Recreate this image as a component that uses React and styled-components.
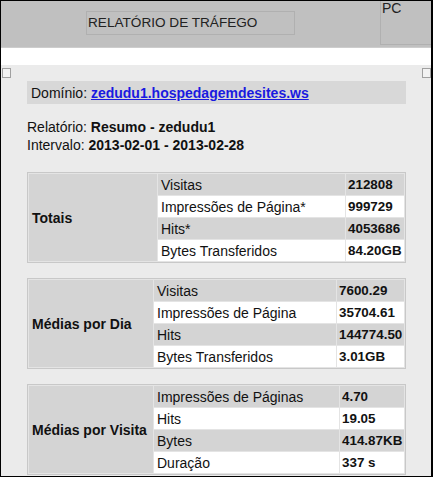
import React from "react";
import styled, { createGlobalStyle } from "styled-components";

const GlobalStyle = createGlobalStyle`
  html, body {
    margin: 0;
    padding: 0;
    background: #ffffff;
    font-family: "Liberation Sans", Arial, sans-serif;
  }
`;

const sections = [
  {
    title: "Totais",
    labelWidth: 128,
    valueWidth: 58,
    rows: [
      ["Visitas", "212808"],
      ["Impressões de Página*", "999729"],
      ["Hits*", "4053686"],
      ["Bytes Transferidos", "84.20GB"],
    ],
  },
  {
    title: "Médias por Dia",
    labelWidth: 124,
    valueWidth: 67,
    rows: [
      ["Visitas", "7600.29"],
      ["Impressões de Página", "35704.61"],
      ["Hits", "144774.50"],
      ["Bytes Transferidos", "3.01GB"],
    ],
  },
  {
    title: "Médias por Visita",
    labelWidth: 124,
    valueWidth: 64,
    rows: [
      ["Impressões de Páginas", "4.70"],
      ["Hits", "19.05"],
      ["Bytes", "414.87KB"],
      ["Duração", "337 s"],
    ],
  },
];

export default function App() {
  return (
    <>
      <GlobalStyle />
      <Frame>
        <Header>
          <TitleBox>RELATÓRIO DE TRÁFEGO</TitleBox>
          <PcBox>PC</PcBox>
        </Header>
        <Strip />
        <Content>
          <Handles>
            <Handle />
            <Handle />
          </Handles>
          <Report>
            <DomainBar>
              Domínio: <DomainLink href="#">zedudu1.hospedagemdesites.ws</DomainLink>
            </DomainBar>
            <Meta>
              <div>
                Relatório: <b>Resumo - zedudu1</b>
              </div>
              <div>
                Intervalo: <b>2013-02-01 - 2013-02-28</b>
              </div>
            </Meta>
            {sections.map((s) => (
              <StatTable key={s.title}>
                <colgroup>
                  <col style={{ width: s.labelWidth }} />
                  <col />
                  <col style={{ width: s.valueWidth }} />
                </colgroup>
                <tbody>
                  {s.rows.map(([name, value], i) => (
                    <tr key={name}>
                      {i === 0 && <SectionCell rowSpan={4}>{s.title}</SectionCell>}
                      <NameCell $shade={i % 2 === 0}>{name}</NameCell>
                      <ValueCell $shade={i % 2 === 0}>{value}</ValueCell>
                    </tr>
                  ))}
                </tbody>
              </StatTable>
            ))}
          </Report>
        </Content>
      </Frame>
    </>
  );
}

const Frame = styled.div`
  box-sizing: border-box;
  width: 433px;
  height: 477px;
  border: 1px solid #000;
  border-right-width: 2px;
  overflow: hidden;
  display: flex;
  flex-direction: column;
  background: #ebebeb;
`;

const Header = styled.header`
  height: 46px;
  flex-shrink: 0;
  background: #c0c0c0;
  border-bottom: 1px solid #cdcdcd;
  display: flex;
  align-items: flex-start;
  justify-content: space-between;
`;

const TitleBox = styled.div`
  box-sizing: border-box;
  margin: 10px 0 0 85px;
  width: 209px;
  height: 24px;
  border: 1px solid #b0b0b0;
  padding: 2px 0 0 1px;
  font-size: 13.6px;
  line-height: 17px;
  color: #222;
`;

const PcBox = styled.div`
  box-sizing: border-box;
  margin-top: -1px;
  width: 51px;
  height: 45px;
  border-left: 1px solid #b0b0b0;
  border-bottom: 1px solid #b0b0b0;
  padding: 1px 0 0 1px;
  font-size: 14px;
  line-height: 14px;
  color: #222;
`;

const Strip = styled.div`
  height: 17px;
  flex-shrink: 0;
  background: #ffffff;
`;

const Content = styled.main`
  flex: 1;
  background: #ebebeb;
  padding-top: 3px;
`;

const Handles = styled.div`
  display: flex;
  justify-content: space-between;
  padding: 0 0 0 1px;
  height: 10px;
`;

const Handle = styled.span`
  box-sizing: border-box;
  width: 9px;
  height: 10px;
  border: 1px solid #a0a0a0;
  background: #f2f2f2;
`;

const Report = styled.div`
  padding: 3px 25px 0 26px;
  font-size: 14px;
  color: #111;
`;

const DomainBar = styled.div`
  height: 23px;
  background: #d8d8d8;
  padding-left: 4px;
  line-height: 24px;
  font-size: 14px;
`;

const DomainLink = styled.a`
  color: #1a1ae0;
  font-weight: bold;
  text-decoration: underline;
`;

const Meta = styled.div`
  margin: 14px 0 18px;
  line-height: 18px;
  font-size: 14px;

  b {
    font-weight: bold;
  }
`;

const StatTable = styled.table`
  width: 100%;
  table-layout: fixed;
  border-collapse: separate;
  border-spacing: 1px;
  border: 1px solid #c8c8c8;
  background: #e4e4e4;
  margin-bottom: 15px;
  font-size: 14px;

  td {
    height: 21px;
    padding: 0 0 0 3px;
    white-space: nowrap;
    overflow: hidden;
  }
`;

const SectionCell = styled.td`
  background: #d4d4d4;
  font-weight: bold;
`;

const NameCell = styled.td`
  background: ${({ $shade }) => ($shade ? "#d4d4d4" : "#ffffff")};
`;

const ValueCell = styled.td`
  background: ${({ $shade }) => ($shade ? "#d4d4d4" : "#ffffff")};
  font-weight: bold;
  font-size: 13.4px;
  && {
    padding-left: 2px;
  }
`;
